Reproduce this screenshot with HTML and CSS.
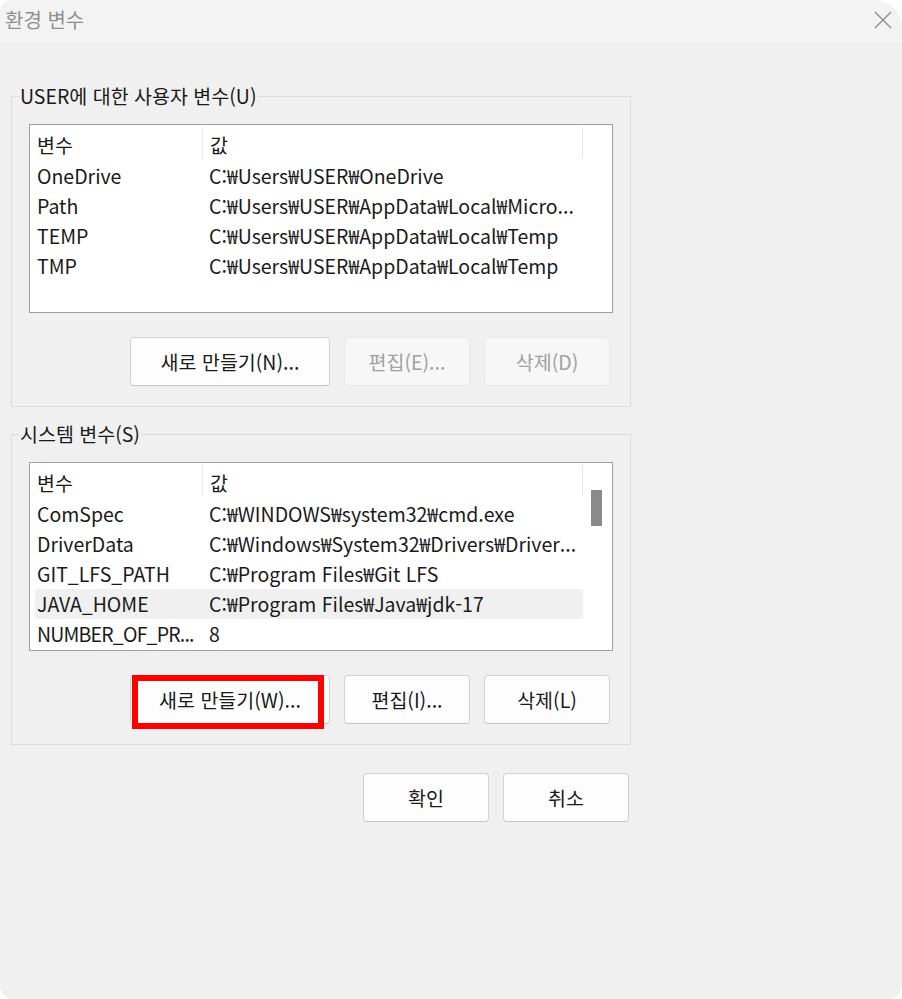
FILE: index.html
```html
<!DOCTYPE html>
<html lang="ko">
<head>
  <meta charset="UTF-8">
  <title>환경 변수</title>
  <link rel="stylesheet" href="styles.css">
</head>
<body>

  <div class="window">
    <div class="titlebar">
      <span class="title">환경 변수</span>
      <svg class="close" width="18" height="18" viewBox="0 0 18 18">
        <path d="M1 1 L17 17 M17 1 L1 17" stroke="#8c8c8c" stroke-width="1.4" fill="none"/>
      </svg>
    </div>

    <div class="content">
      <!-- user variables -->
      <fieldset class="group">
        <legend>USER에 대한 사용자 변수(U)</legend>
        <div class="list">
          <div class="list-body">
            <div class="list-head">
              <div class="col-name">변수</div>
              <div class="col-value">값</div>
            </div>
            <div class="list-row"><div class="col-name">OneDrive</div><div class="col-value">C:₩Users₩USER₩OneDrive</div></div>
            <div class="list-row"><div class="col-name">Path</div><div class="col-value">C:₩Users₩USER₩AppData₩Local₩Micro...</div></div>
            <div class="list-row"><div class="col-name">TEMP</div><div class="col-value">C:₩Users₩USER₩AppData₩Local₩Temp</div></div>
            <div class="list-row"><div class="col-name">TMP</div><div class="col-value">C:₩Users₩USER₩AppData₩Local₩Temp</div></div>
          </div>
          <div class="scrollbar"></div>
        </div>
        <div class="btn-row">
          <button class="btn btn-wide">새로 만들기(N)...</button>
          <button class="btn" disabled>편집(E)...</button>
          <button class="btn" disabled>삭제(D)</button>
        </div>
      </fieldset>

      <!-- system variables -->
      <fieldset class="group">
        <legend>시스템 변수(S)</legend>
        <div class="list">
          <div class="list-body">
            <div class="list-head">
              <div class="col-name">변수</div>
              <div class="col-value">값</div>
            </div>
            <div class="list-row"><div class="col-name">ComSpec</div><div class="col-value">C:₩WINDOWS₩system32₩cmd.exe</div></div>
            <div class="list-row"><div class="col-name">DriverData</div><div class="col-value">C:₩Windows₩System32₩Drivers₩Driver...</div></div>
            <div class="list-row"><div class="col-name">GIT_LFS_PATH</div><div class="col-value">C:₩Program Files₩Git LFS</div></div>
            <div class="list-row selected"><div class="col-name">JAVA_HOME</div><div class="col-value">C:₩Program Files₩Java₩jdk-17</div></div>
            <div class="list-row"><div class="col-name narrow">NUMBER_OF_PR...</div><div class="col-value">8</div></div>
          </div>
          <div class="scrollbar">
            <div class="thumb"></div>
          </div>
        </div>
        <div class="btn-row">
          <button class="btn btn-wide marked">새로 만들기(W)...</button>
          <button class="btn">편집(I)...</button>
          <button class="btn">삭제(L)</button>
        </div>
      </fieldset>

      <div class="dialog-buttons">
        <button class="btn">확인</button>
        <button class="btn">취소</button>
      </div>
    </div>
  </div>

</body>
</html>
```

FILE: styles.css
```css
body {
  margin: 0;
  background: #ffffff;
  font-family: "Noto Sans CJK KR", "Noto Sans", sans-serif;
  color: #1a1a1a;
}

.window {
  width: 902px;
  height: 999px;
  background: #f0f0f0;
  border-radius: 12px 28px 14px 14px;
  overflow: hidden;
}

.titlebar {
  height: 43px;
  background: #f3f3f3;
  display: flex;
  align-items: center;
  justify-content: space-between;
  padding: 0 10px 0 5px;
}

.title {
  font-size: 20px;
  line-height: 24px;
  color: #8e8e8e;
  margin-top: -4px;
}

.close {
  margin-top: -4px;
}

.content {
  width: 620px;
  padding: 42px 0 0 11px;
}

.group {
  margin: 0 0 16px 0;
  padding: 17px 17px 20px 17px;
  border: 1px solid #dcdcdc;
}

.group legend {
  font-size: 19.5px;
  line-height: 22px;
  padding: 0 1px;
  margin-left: -10px;
  color: #1a1a1a;
}

.list {
  display: flex;
  height: 187px;
  background: #ffffff;
  border: 1px solid #a0a0a0;
  font-size: 19.5px;
}

.list-body {
  width: 553px;
}

.list-head {
  display: flex;
  height: 36px;
  margin-left: 5px;
}

.list-head .col-name,
.list-head .col-value {
  height: 31px;
  margin-top: 2px;
  line-height: 36px;
  border-right: 1px solid #e6e6e6;
}

.list-row {
  display: flex;
  height: 30px;
  line-height: 30px;
  margin-left: 5px;
  white-space: nowrap;
}

.list-row.selected {
  background: #f0f0f0;
}

.col-name {
  width: 165px;
  padding-left: 2px;
  overflow: hidden;
}

.col-name.narrow {
  letter-spacing: -0.8px;
}

.col-value {
  flex: 1;
  padding-left: 7px;
}

.scrollbar {
  width: 28px;
}

.thumb {
  width: 11px;
  height: 36px;
  margin: 27px 0 0 8px;
  background: #8a8a8a;
}

.btn-row {
  display: flex;
  justify-content: flex-end;
  gap: 14px;
  margin: 24px 3px 0 0;
}

.btn {
  width: 126px;
  height: 49px;
  padding: 0;
  background: #fdfdfd;
  border: 1px solid #d2d2d2;
  border-bottom-color: #c4c4c4;
  border-radius: 4px;
  font-family: inherit;
  font-size: 19.5px;
  color: #1a1a1a;
}

.btn-wide {
  width: 200px;
}

.btn:disabled {
  background: #f7f7f7;
  border-color: #e8e8e8;
  color: #a0a0a0;
}

/* red annotation box around the new button */
.marked {
  position: relative;
}

.marked::after {
  content: "";
  position: absolute;
  top: -1px;
  left: 1px;
  right: 5px;
  bottom: -6px;
  border: 6px solid #ff0000;
}

.dialog-buttons {
  display: flex;
  justify-content: flex-end;
  gap: 14px;
  margin: 28px 2px 0 0;
}
```
